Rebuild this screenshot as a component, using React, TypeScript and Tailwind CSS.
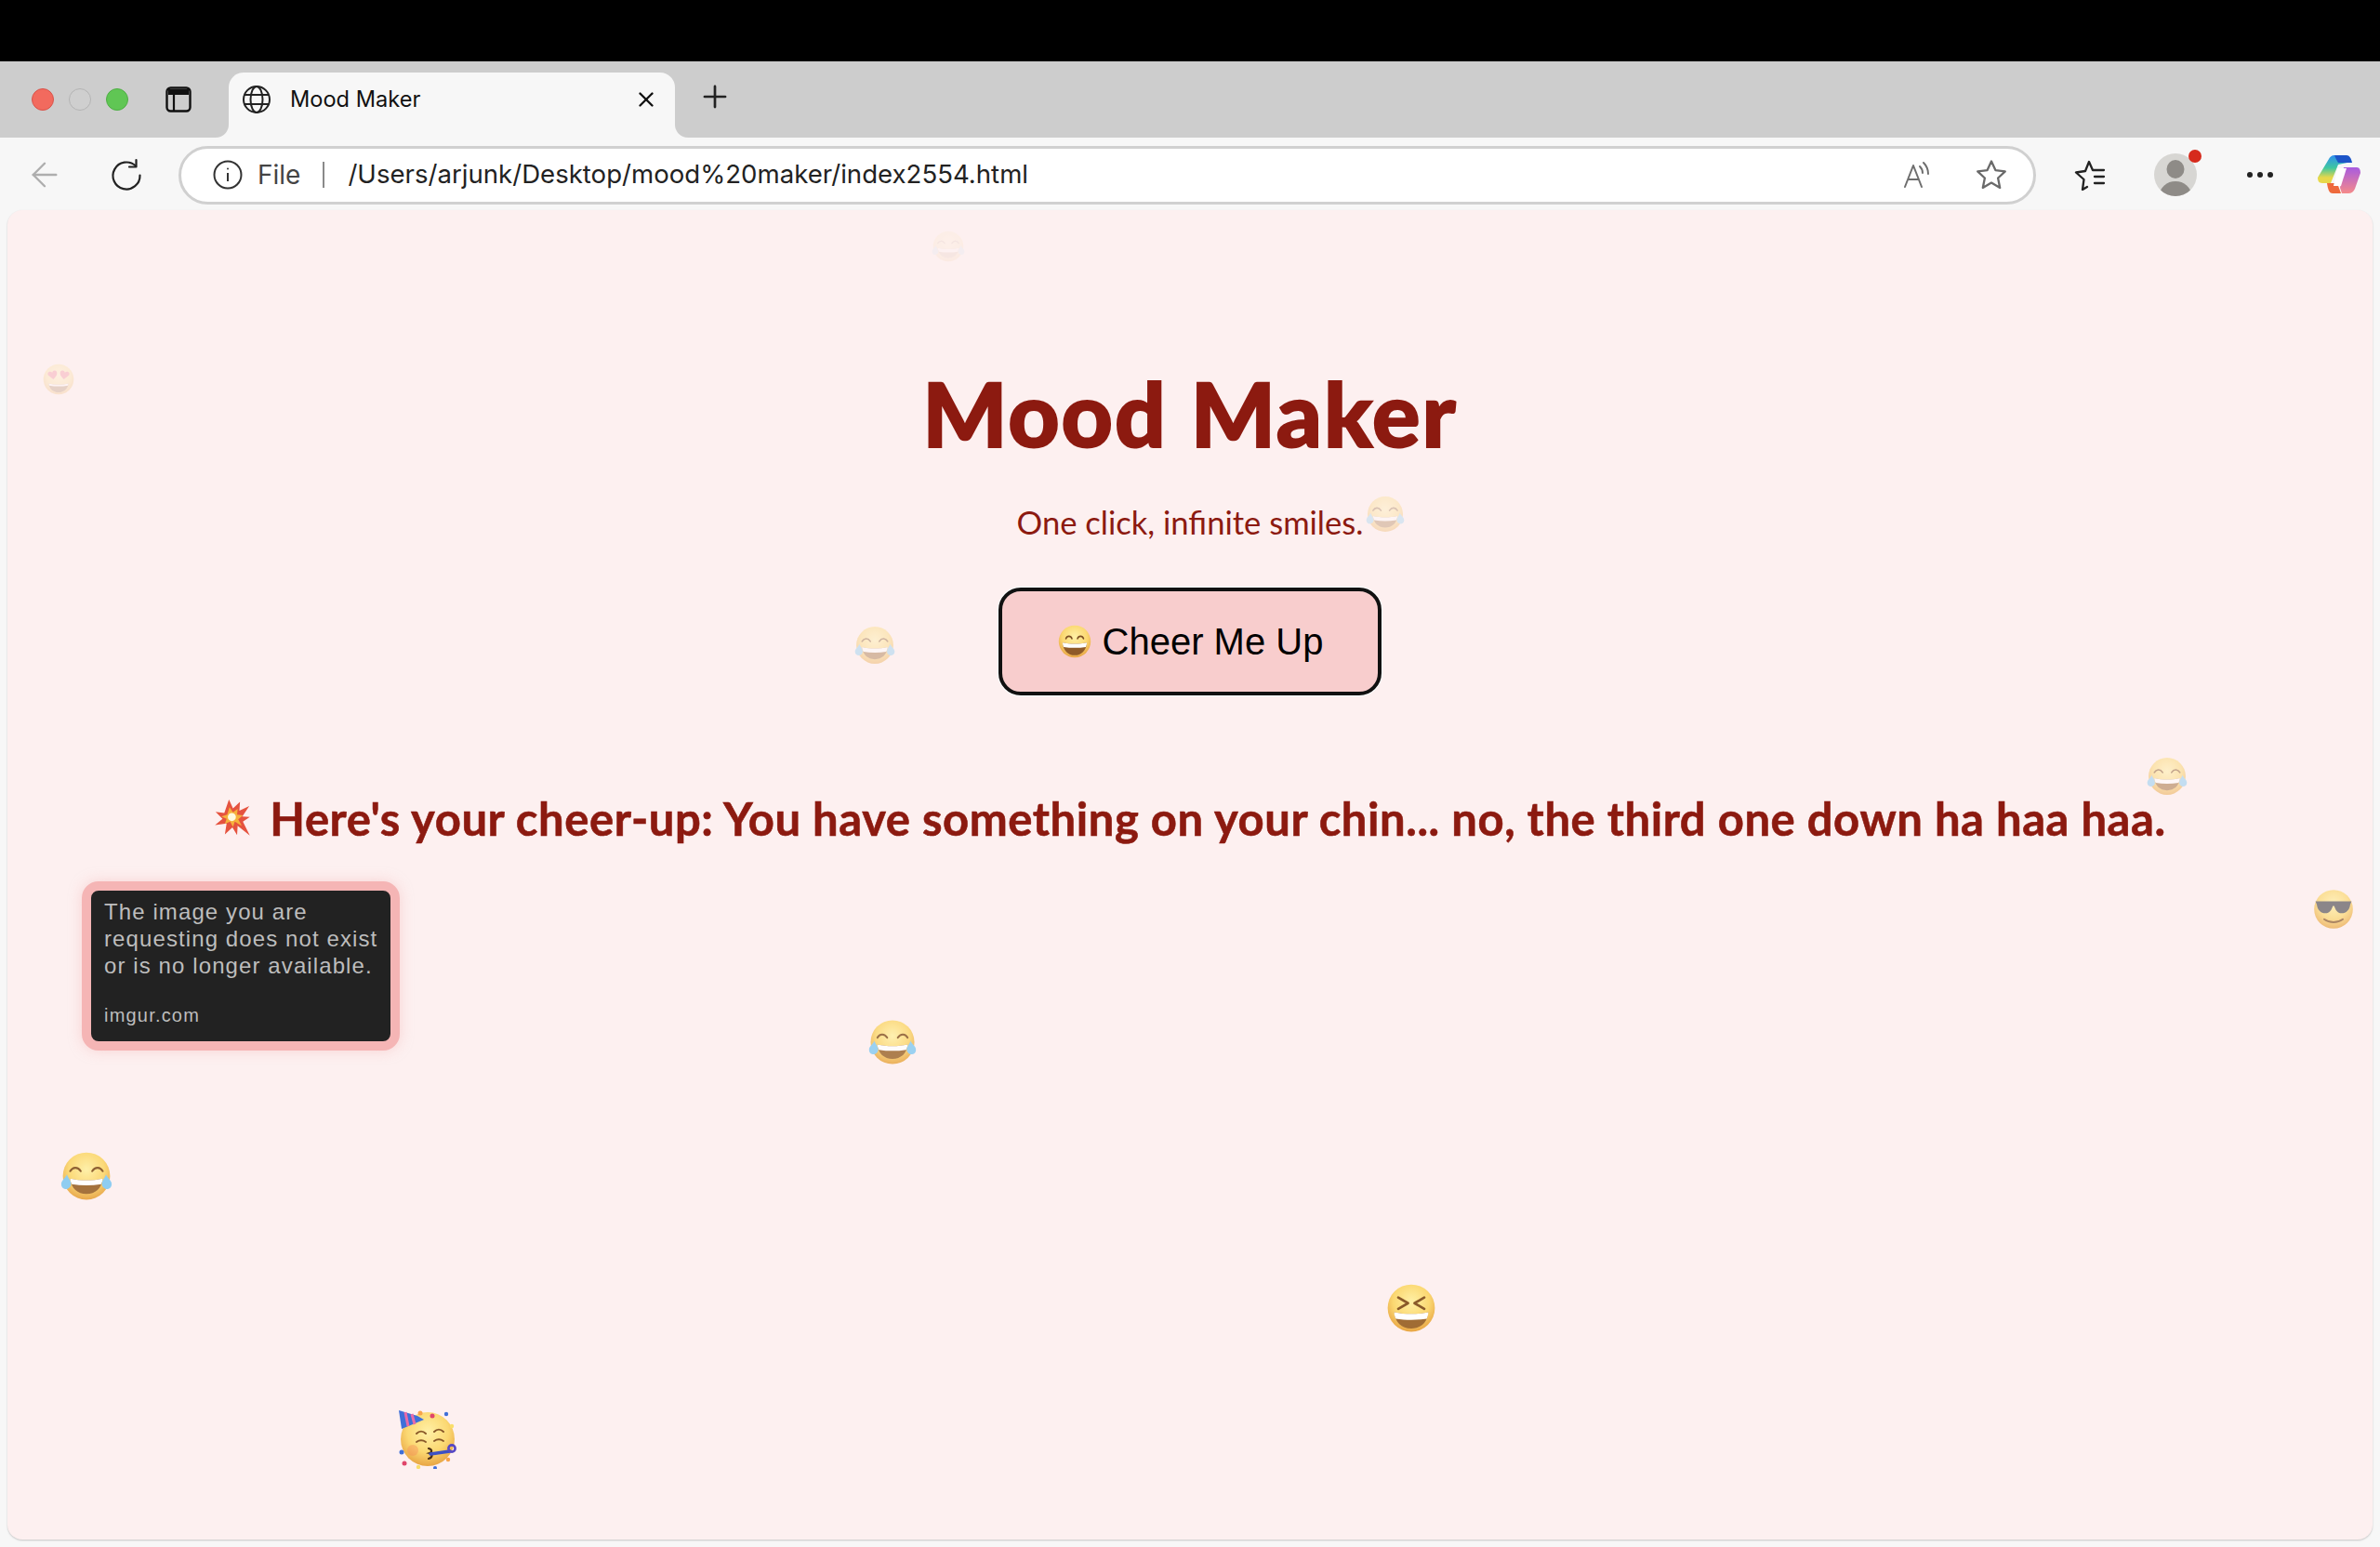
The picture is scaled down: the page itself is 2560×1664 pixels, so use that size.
import { useId } from 'react';
import { X, Plus, ArrowLeft } from 'lucide-react';

// ─── Emoji drawings ───────────────────────────────────────────────
function Face({ children }: { children: React.ReactNode }) {
  const id = useId();
  return (
    <>
      <defs>
        <radialGradient id={id} cx="50%" cy="36%" r="64%">
          <stop offset="0%" stopColor="#fff0a6" />
          <stop offset="60%" stopColor="#fbd872" />
          <stop offset="100%" stopColor="#e8a544" />
        </radialGradient>
      </defs>
      <circle cx="32" cy="32" r="29" fill={`url(#${id})`} />
      {children}
    </>
  );
}

function Laugh() {
  return (
    <Face>
      <path d="M12 26c3-5 9-6 13 0M39 26c4-6 10-5 13 0" fill="none" stroke="#8a5a2a" strokeWidth="2.4" strokeLinecap="round" />
      <path d="M12 35c13 3 27 3 40 0-1 12-9 19-20 19S13 47 12 35z" fill="#a06c34" />
      <path d="M12 35c13 3 27 3 40 0 0 3-1 5-2 7-12 2-24 2-36 0-1-2-2-4-2-7z" fill="#fff" />
      <path d="M8 30c-2 5-7 7-7 12 0 4 3 6 6 6s6-3 6-6c0-5-4-8-5-12z" fill="#8accf2" />
      <path d="M56 30c2 5 7 7 7 12 0 4-3 6-6 6s-6-3-6-6c0-5 4-8 5-12z" fill="#8accf2" />
    </Face>
  );
}

function Grin() {
  return (
    <Face>
      <path d="M16 27c2-6 9-6 11 0M37 27c2-6 9-6 11 0" fill="none" stroke="#7d4e22" strokeWidth="2.6" strokeLinecap="round" />
      <path d="M10 34c14 3 30 3 44 0-1 14-10 23-22 23S11 48 10 34z" fill="#8f5a28" />
      <path d="M10 34c14 3 30 3 44 0 0 3-1 6-2 8-13 2-27 2-40 0-1-2-2-5-2-8z" fill="#fff" />
    </Face>
  );
}

function Squint() {
  return (
    <Face>
      <path d="M16 19l12 7-12 7M48 19l-12 7 12 7" fill="none" stroke="#8a5a2a" strokeWidth="3" strokeLinecap="round" strokeLinejoin="round" />
      <path d="M11 37c14 3 28 3 42 0-1 12-9 20-21 20S12 49 11 37z" fill="#a06c34" />
      <path d="M11 37c14 3 28 3 42 0 0 3-1 6-2 8-12 2-26 2-38 0-1-2-2-5-2-8z" fill="#fff" />
    </Face>
  );
}

function Cool() {
  return (
    <Face>
      <path d="M5 20h54l-2 5c-1 8-6 13-13 13-6 0-9-5-11-11h-2c-2 6-5 11-11 11-7 0-12-5-13-13z" fill="#5c5a5e" />
      <path d="M18 47c8 6 20 6 28 0" fill="none" stroke="#8a5a2a" strokeWidth="2.6" strokeLinecap="round" />
    </Face>
  );
}

function HeartEyes() {
  return (
    <Face>
      <path d="M22 32l-9-7c-5-5 2-11 7-6 1-6 10-5 9 2 0 4-4 8-7 11zM42 32l9-7c5-5-2-11-7-6-1-6-10-5-9 2 0 4 4 8 7 11z" fill="#ee4b64" />
      <path d="M13 40c12 3 26 3 38 0-1 10-9 17-19 17s-18-7-19-17z" fill="#8f5a28" />
      <path d="M13 40c12 3 26 3 38 0l-1 4c-12 2-24 2-36 0z" fill="#fff" />
    </Face>
  );
}

function Party() {
  return (
    <>
      <Face>
        <path d="M20 26c3-3 7-3 10 0M39 24c3-3 7-3 10 0M20 35c3-2 7-2 10 0M39 34c3-2 7-2 10 0" fill="none" stroke="#8a5a2a" strokeWidth="2" strokeLinecap="round" />
        <circle cx="16" cy="44" r="6" fill="#f58a5b" opacity="0.4" />
        <path d="M33 42c4 1 4 4 1 5 4 1 3 5-1 6" fill="none" stroke="#4d3015" strokeWidth="2.2" strokeLinecap="round" />
        <path d="M35 48l21-3" stroke="#3d51c4" strokeWidth="3.4" strokeLinecap="round" />
        <circle cx="58" cy="42" r="3.6" fill="none" stroke="#5748c4" strokeWidth="2.6" />
      </Face>
      <path d="M1 1l20 6 7 4L4 21z" fill="#3f6fd8" />
      <path d="M8 3l3 15M15 5l3 11" stroke="#e86aa8" strokeWidth="3" />
      <circle cx="24" cy="4" r="2.5" fill="#f7a34a" />
      <circle cx="37" cy="7" r="2.5" fill="#e0456a" />
      <circle cx="52" cy="5" r="2.2" fill="#3f6fd8" />
      <circle cx="58" cy="18" r="2.2" fill="#f9de6a" />
      <circle cx="4" cy="46" r="2.5" fill="#3f6fd8" />
      <circle cx="7" cy="58" r="2.5" fill="#e0456a" />
      <circle cx="22" cy="62" r="2.2" fill="#f9de6a" />
      <circle cx="40" cy="63" r="2" fill="#3f6fd8" />
      <circle cx="54" cy="54" r="2.2" fill="#f7a34a" />
    </>
  );
}

function Boom({ className }: { className: string }) {
  return (
    <svg viewBox="0 0 64 64" className={className}>
      <path d="M26 0l7 15 12-11-1 15 17-8-12 18 13 1-12 8 12 24-21-17-1 16-8-13-13 12 3-19-20 3 13-11L3 21l15 2z" fill="#e5533f" />
      <path d="M27 13l6 9 8-6-1 10 10 1-8 7 6 11-12-7-3 9-5-9-9 4 3-9-9-4 10-3z" fill="#f6b23d" />
      <circle cx="31" cy="30" r="7" fill="#fffbe0" />
    </svg>
  );
}

function Floating({ className, children }: { className: string; children: React.ReactNode }) {
  return (
    <svg viewBox="0 0 64 64" className={`absolute blur-[0.6px] ${className}`}>
      {children}
    </svg>
  );
}

// ─── Browser chrome icons ─────────────────────────────────────────
function Globe() {
  return (
    <svg viewBox="0 0 32 32" className="w-8 h-8 shrink-0" fill="none" stroke="#222" strokeWidth="2">
      <circle cx="16" cy="16" r="14" />
      <ellipse cx="16" cy="16" rx="6.5" ry="14" />
      <path d="M3 11h26M3 21h26" />
    </svg>
  );
}

function SidebarIcon() {
  return (
    <svg viewBox="0 0 28 28" className="w-7 h-7">
      <rect x="1.5" y="1.5" width="25" height="25" rx="4" fill="none" stroke="#111" strokeWidth="2.4" />
      <path d="M3 3h22v6H3z" fill="#111" />
      <path d="M9 9v17" stroke="#111" strokeWidth="2.2" />
    </svg>
  );
}

function Reload() {
  return (
    <svg viewBox="0 0 36 36" className="w-9 h-9" fill="none" stroke="#222" strokeWidth="2.2" strokeLinecap="round" strokeLinejoin="round">
      <path d="M28 8.5A14.5 14.5 0 1 0 32.5 18.5" />
      <path d="M28.5 2v7.5H21" />
    </svg>
  );
}

function InfoIcon() {
  return (
    <svg viewBox="0 0 32 32" className="w-8 h-8" fill="none" stroke="#333" strokeWidth="2">
      <circle cx="16" cy="16" r="14.5" />
      <path d="M16 14v9" />
      <circle cx="16" cy="9.5" r="1" fill="#333" stroke="none" />
    </svg>
  );
}

function ReadAloud() {
  return (
    <svg viewBox="0 0 32 32" className="w-8 h-8" fill="none" stroke="#6e6e6e" strokeWidth="2" strokeLinecap="round" strokeLinejoin="round">
      <path d="M2 29L11 6l9 23M5.5 21h11" />
      <path d="M18 7c2 2 3 4 3 7M22 3c3 3 5 7 5 12" />
    </svg>
  );
}

function StarIcon() {
  return (
    <svg viewBox="0 0 34 34" className="w-[34px] h-[34px]" fill="none" stroke="#6a6a6a" strokeWidth="2.3" strokeLinejoin="round">
      <path d="M17 2.5l4.4 9.6 10.4 1.2-7.7 7.2 2.1 10.4L17 25.6 7.8 30.9l2.1-10.4-7.7-7.2 10.4-1.2z" />
    </svg>
  );
}

function FavList() {
  return (
    <svg viewBox="0 0 34 34" className="w-[34px] h-[34px]" fill="none" stroke="#222" strokeWidth="2.3" strokeLinejoin="round" strokeLinecap="round">
      <path d="M14 30l-5 3 1.5-11L2 14.5l10-1.5L16 3l4 9h12" />
      <path d="M22 19h10M22 26h10" />
    </svg>
  );
}

function Avatar() {
  return (
    <div className="relative w-[46px] h-[46px]">
      <svg viewBox="0 0 46 46" className="w-full h-full">
        <clipPath id="avatar-clip"><circle cx="23" cy="23" r="23" /></clipPath>
        <circle cx="23" cy="23" r="23" fill="#d7d6d3" />
        <g clipPath="url(#avatar-clip)" fill="#8e8b87">
          <ellipse cx="23" cy="17" rx="9.5" ry="10" />
          <ellipse cx="23" cy="45" rx="17" ry="15" />
        </g>
      </svg>
      <span className="absolute -top-1 right-[-5px] w-[14px] h-[14px] rounded-full bg-[#d62a1c]" />
    </div>
  );
}

function Copilot() {
  return (
    <svg viewBox="0 0 46 42" className="w-[46px] h-[42px]">
      <defs>
        <linearGradient id="cp-left" x1="0" y1="0" x2="0" y2="1">
          <stop offset="0%" stopColor="#2f8ff0" />
          <stop offset="45%" stopColor="#3fc7a0" />
          <stop offset="80%" stopColor="#e7d84a" />
        </linearGradient>
        <linearGradient id="cp-right" x1="0" y1="0" x2="0" y2="1">
          <stop offset="0%" stopColor="#a85be0" />
          <stop offset="100%" stopColor="#f58a8a" />
        </linearGradient>
      </defs>
      <path d="M12 4c1-2 3-4 6-4h13l1 8-10 2-8 20H5c-4 0-5-3-5-6z" fill="url(#cp-left)" />
      <path d="M18 0h13c3 0 5 3 6 8H22c-2-3-3-6-4-8z" fill="#1d55c8" />
      <path d="M28 13h14c3 0 4 3 4 6l-6 17c-1 3-4 5-7 5h-7l-2-6z" fill="url(#cp-right)" />
      <path d="M10 30h11l4 11h-9c-3 0-5-3-6-11z" fill="#ee6a3c" />
      <path d="M21 14h10l-6 19h-8z" fill="#fff" />
    </svg>
  );
}

export default function App() {
  return (
    <div className="relative flex flex-col h-[1664px] overflow-hidden bg-[#f7f7f7] font-['Inter',sans-serif]">
      {/* Black strip */}
      <div className="h-[66px] bg-black shrink-0" />

      {/* Tab strip */}
      <div className="h-[82px] bg-[#cdcdcd] flex items-end shrink-0">
        <div className="flex items-center self-stretch pl-[34px] w-[246px]">
          <span className="w-6 h-6 rounded-full bg-[#f26a5e] border border-[#d9534a]" />
          <span className="w-6 h-6 rounded-full ml-4 bg-[#cfcfcf] border border-[#b4b4b4]" />
          <span className="w-6 h-6 rounded-full ml-4 bg-[#60c654] border border-[#4fae45]" />
          <span className="ml-[40px]"><SidebarIcon /></span>
        </div>
        <div className="relative flex items-center h-[70px] w-[480px] bg-[#f7f7f7] rounded-t-[16px] pl-[14px] pr-[18px] pb-[13px]">
          <span className="absolute -left-4 bottom-0 w-4 h-4 bg-[#f7f7f7]"><span className="block w-full h-full rounded-br-[14px] bg-[#cdcdcd]" /></span>
          <span className="absolute -right-4 bottom-0 w-4 h-4 bg-[#f7f7f7]"><span className="block w-full h-full rounded-bl-[14px] bg-[#cdcdcd]" /></span>
          <Globe />
          <span className="ml-5 text-[23.6px] text-[#111] flex-1">Mood Maker</span>
          <X size={26} strokeWidth={2.2} className="text-[#111]" />
        </div>
        <div className="self-stretch flex items-center pl-[24px] pb-[6px]">
          <Plus size={38} strokeWidth={1.7} className="text-[#222]" />
        </div>
      </div>

      {/* Toolbar */}
      <div className="h-[78px] flex items-center shrink-0 pl-[27px] pr-[18px] pt-[2px]">
        <ArrowLeft size={42} strokeWidth={1.4} className="text-[#aeaeae]" />
        <span className="ml-[49px]"><Reload /></span>
        <div className="ml-[38px] w-[1998px] h-[63px] flex items-center bg-white border-[3px] border-[#d0d0d0] rounded-full pl-[34px] pr-[28px]">
          <InfoIcon />
          <span className="ml-[16px] text-[28px] text-[#444]">File</span>
          <span className="ml-[24px] w-[2px] h-[28px] bg-[#8a8a8a]" />
          <span className="ml-[25px] text-[27.6px] text-[#222] flex-1">/Users/arjunk/Desktop/mood%20maker/index2554.html</span>
          <ReadAloud />
          <span className="ml-[46px]"><StarIcon /></span>
        </div>
        <span className="ml-[41px]"><FavList /></span>
        <span className="ml-[52px]"><Avatar /></span>
        <span className="ml-[54px] flex gap-[5px]">
          <i className="w-[6px] h-[6px] rounded-full bg-[#222]" />
          <i className="w-[6px] h-[6px] rounded-full bg-[#222]" />
          <i className="w-[6px] h-[6px] rounded-full bg-[#222]" />
        </span>
        <span className="ml-[48px]"><Copilot /></span>
      </div>

      {/* Page */}
      <div className="relative mx-2 h-[1430px] bg-[#fdf0f0] rounded-[16px] shadow-[0_1px_2px_rgba(0,0,0,0.2)] flex flex-col items-center pt-[160px] font-['Lato',sans-serif] text-[#8c1a10]">
        <h1 className="text-[96px] leading-[116px] font-black tracking-[2px] [-webkit-text-stroke:2px_#8c1a10]">Mood Maker</h1>
        <p className="mt-[38px] text-[34.6px] leading-[44px]">One click, infinite smiles.</p>
        <button className="mt-[48px] w-[412px] h-[116px] flex items-center justify-center gap-[11px] bg-[#f8cdcd] border-4 border-[#111] rounded-[24px] text-[40px] text-black font-['Liberation_Sans',sans-serif] shadow-[0_0_0_1px_#fff]">
          <svg viewBox="0 0 64 64" className="w-[38px] h-[38px]"><Grin /></svg>
          Cheer Me Up
        </button>
        <div className="mt-[100px] flex items-center gap-[20px] text-[49px] leading-[64px] font-bold tracking-[0.55px] [-webkit-text-stroke:0.6px_#8c1a10]">
          <Boom className="w-10 h-10" />
          <span>Here's your cheer-up: You have something on your chin... no, the third one down ha haa haa.</span>
        </div>
        {/* Broken imgur placeholder */}
        <div className="self-start ml-[80px] mt-[36px] w-[342px] h-[182px] border-[10px] border-[#f5b5b5] rounded-[18px] bg-[#222] shadow-[0_0_14px_rgba(245,181,181,0.5)] pl-[14px] pt-[8px] text-[#bdbdbd] font-['Liberation_Sans',sans-serif] text-[24px] leading-[29px] tracking-[1.1px]">
          <div>The image you are</div>
          <div>requesting does not exist</div>
          <div>or is no longer available.</div>
          <div className="mt-[25px] text-[20px] tracking-[1.2px]">imgur.com</div>
        </div>

        {/* Floating emoji */}
        <Floating className="left-[994px] top-[21px] w-9 h-9 opacity-[0.07]"><Laugh /></Floating>
        <Floating className="left-[37px] top-[164px] w-9 h-9 opacity-20"><HeartEyes /></Floating>
        <Floating className="left-[1461px] top-[306px] w-[42px] h-[42px] opacity-30"><Laugh /></Floating>
        <Floating className="left-[911px] top-[446px] w-11 h-11 opacity-40"><Laugh /></Floating>
        <Floating className="left-[2301px] top-[587px] w-11 h-11 opacity-50"><Laugh /></Floating>
        <Floating className="left-[2479px] top-[729px] w-[46px] h-[46px] opacity-70"><Cool /></Floating>
        <Floating className="left-[926px] top-[869px] w-[52px] h-[52px] opacity-85"><Laugh /></Floating>
        <Floating className="left-[57px] top-[1011px] w-[56px] h-[56px] opacity-95"><Laugh /></Floating>
        <Floating className="left-[1482px] top-[1153px] w-[56px] h-[56px]"><Squint /></Floating>
        <Floating className="left-[420px] top-[1290px] w-[64px] h-[64px]"><Party /></Floating>
      </div>
    </div>
  );
}
